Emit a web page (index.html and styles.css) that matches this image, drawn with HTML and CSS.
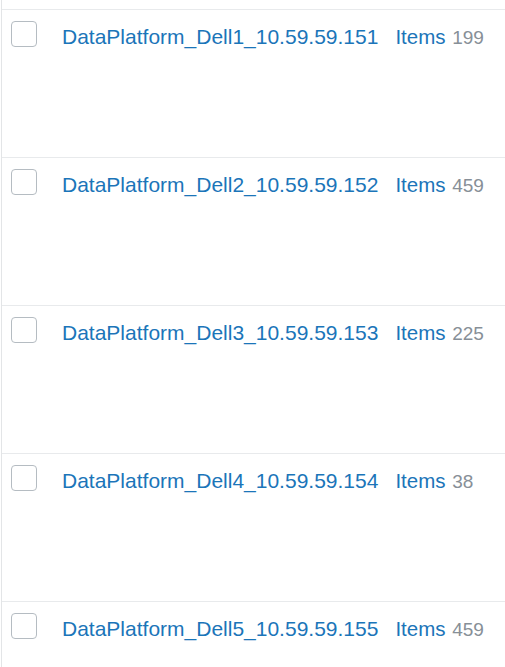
FILE: index.html
```html
<!DOCTYPE html>
<html>
<head>
<meta charset="utf-8">
<link rel="stylesheet" href="styles.css">
</head>
<body>
<div class="list">
  <div class="row"><span class="check"></span><a class="name">DataPlatform_Dell1_10.59.59.151</a><span class="items">Items <span class="count">199</span></span></div>
  <div class="row"><span class="check"></span><a class="name">DataPlatform_Dell2_10.59.59.152</a><span class="items">Items <span class="count">459</span></span></div>
  <div class="row"><span class="check"></span><a class="name">DataPlatform_Dell3_10.59.59.153</a><span class="items">Items <span class="count">225</span></span></div>
  <div class="row"><span class="check"></span><a class="name">DataPlatform_Dell4_10.59.59.154</a><span class="items">Items <span class="count">38</span></span></div>
  <div class="row"><span class="check"></span><a class="name">DataPlatform_Dell5_10.59.59.155</a><span class="items">Items <span class="count">459</span></span></div>
</div>
</body>
</html>
```
FILE: styles.css
```css
html, body {
  margin: 0;
  padding: 0;
  background: #ffffff;
}
.list {
  margin-left: 1px;
  border-left: 1px solid #e3e5e7;
  padding-top: 9px;
  height: 667px;
  overflow: hidden;
  box-sizing: border-box;
  font-family: "Liberation Sans", Arial, sans-serif;
}
.row {
  height: 148px;
  box-sizing: border-box;
  border-top: 1px solid #e8eaec;
  display: flex;
  align-items: flex-start;
  padding-top: 11px;
  padding-left: 9px;
}
.check {
  width: 24px;
  height: 24px;
  border: 1px solid #b5bcc2;
  border-radius: 4px;
  box-sizing: content-box;
  flex: none;
}
.name {
  margin-left: 25px;
  margin-top: 4px;
  font-size: 21px;
  line-height: 24px;
  color: #1b75b9;
  white-space: nowrap;
}
.items {
  margin-left: 17px;
  margin-top: 4px;
  font-size: 20.5px;
  line-height: 24px;
  color: #1b75b9;
  white-space: nowrap;
}
.count {
  margin-left: 1px;
  color: #878f97;
  font-size: 19px;
}
```
